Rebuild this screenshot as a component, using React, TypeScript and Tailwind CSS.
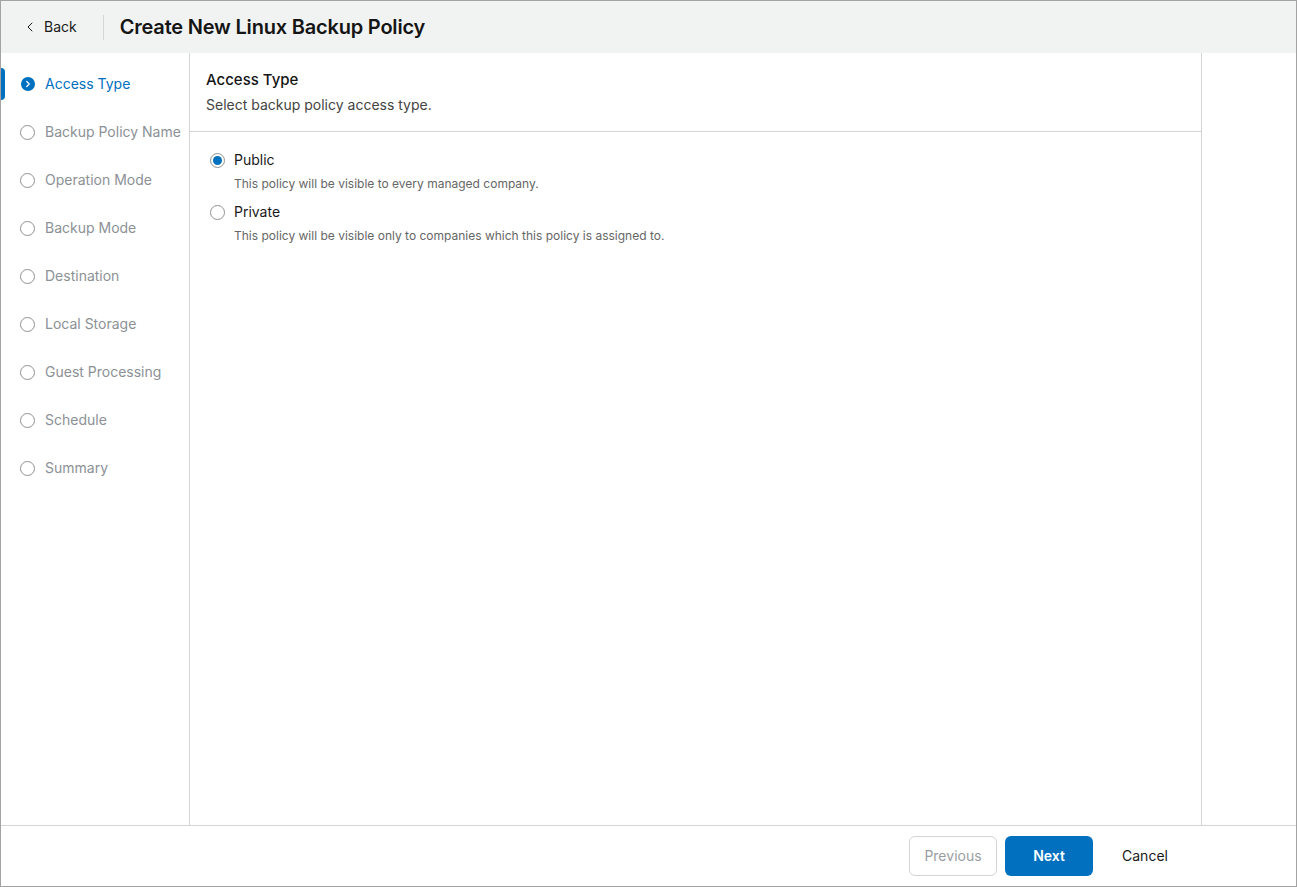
import { ChevronLeft, ChevronRight } from 'lucide-react';

const steps = [
  'Access Type',
  'Backup Policy Name',
  'Operation Mode',
  'Backup Mode',
  'Destination',
  'Local Storage',
  'Guest Processing',
  'Schedule',
  'Summary',
];

const options = [
  { label: 'Public', hint: 'This policy will be visible to every managed company.', checked: true },
  { label: 'Private', hint: 'This policy will be visible only to companies which this policy is assigned to.', checked: false },
];

function StepItem({ label, active }: { label: string; active: boolean }) {
  return (
    <div className="flex h-12 items-center">
      <div className={`h-8 w-[4px] rounded-r-sm ${active ? 'bg-[#0070bf]' : 'bg-transparent'}`} />
      <div className="ml-[15px] flex h-[15px] w-[15px] items-center justify-center">
        {active ? (
          <span className="flex h-[14px] w-[14px] items-center justify-center rounded-full bg-[#0070bf]">
            <ChevronRight className="h-[10px] w-[10px] text-white" strokeWidth={3} />
          </span>
        ) : (
          <span className="h-[15px] w-[15px] rounded-full border border-[#8e9296]" />
        )}
      </div>
      <span className={`ml-[10px] text-sm ${active ? 'text-[#0070bf]' : 'text-[#8c9196]'}`}>{label}</span>
    </div>
  );
}

function Radio({ checked }: { checked: boolean }) {
  return (
    <span
      className={`flex h-[15px] w-[15px] items-center justify-center rounded-full border ${
        checked ? 'border-[#8e9296]' : 'border-[#8e9296]'
      }`}
    >
      {checked && <span className="h-[9px] w-[9px] rounded-full bg-[#0070bf]" />}
    </span>
  );
}

export default function App() {
  return (
    <div
      className="flex h-[887px] w-[1297px] flex-col border border-[#a3a3a3] bg-white text-[#1a1a1a]"
      style={{ fontFamily: 'Inter, "Noto Sans", sans-serif' }}
    >
      <header className="flex h-[52px] shrink-0 items-center bg-[#f1f3f3]">
        <button className="ml-[21px] flex items-center gap-[6px] text-sm text-[#1a1a1a]">
          <ChevronLeft className="h-4 w-4" strokeWidth={1.5} />
          <span>Back</span>
        </button>
        <div className="ml-[26px] h-[25px] w-px bg-[#d4d6d7]" />
        <h1 className="ml-4 text-[20px] font-semibold tracking-[-0.2px] text-[#151515]">
          Create New Linux Backup Policy
        </h1>
      </header>

      <div className="flex min-h-0 flex-1">
        <nav className="w-[189px] shrink-0 border-r border-[#d2d4d5] pt-[7px]">
          {steps.map((s, i) => (
            <StepItem key={s} label={s} active={i === 0} />
          ))}
        </nav>

        <main className="flex-1 border-r border-[#d2d4d5]">
          <div className="border-b border-[#d2d4d5] px-4 pb-4 pt-[17px]">
            <h2 className="text-[15px] font-medium leading-5 text-[#151515]">Access Type</h2>
            <p className="mt-[5px] text-sm leading-5 text-[#444]">Select backup policy access type.</p>
          </div>
          <div className="pl-5 pt-[18px]">
            {options.map((o, i) => (
              <div key={o.label} className={i > 0 ? 'mt-[10px]' : ''}>
                <label className="flex h-5 items-center gap-[9px] text-sm text-[#1a1a1a]">
                  <Radio checked={o.checked} />
                  <span>{o.label}</span>
                </label>
                <p className="ml-6 mt-[6px] text-xs leading-4 text-[#666]">{o.hint}</p>
              </div>
            ))}
          </div>
        </main>

        <aside className="w-[94px] shrink-0" />
      </div>

      <footer className="flex h-[61px] shrink-0 items-center border-t border-[#d2d4d5] pr-[109px]">
        <div className="ml-auto flex items-center">
          <button className="h-[40px] w-[88px] rounded-md border border-[#d2d4d5] text-sm text-[#9a9ea2]">
            Previous
          </button>
          <button className="ml-[8px] h-[40px] w-[88px] rounded-md bg-[#0070bf] text-sm font-semibold text-white">
            Next
          </button>
          <button className="ml-[10px] h-[40px] w-[84px] text-sm text-[#1a1a1a]">Cancel</button>
        </div>
      </footer>
    </div>
  );
}
